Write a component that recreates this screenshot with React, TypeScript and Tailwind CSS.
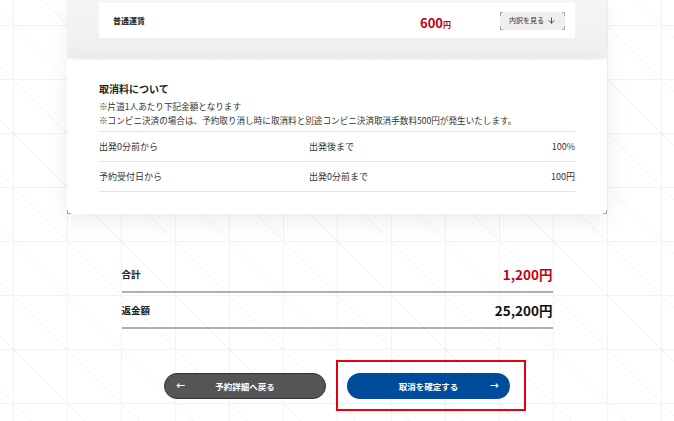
import { ArrowDown } from "lucide-react";

function Corners({ color = "border-[#9a9a9a]", size = "w-[5px] h-[5px]", top = true }: { color?: string; size?: string; top?: boolean }) {
  return (
    <>
      {top && <span className={`absolute left-0 top-0 border-l border-t ${color} ${size}`} />}
      {top && <span className={`absolute right-0 top-0 border-r border-t ${color} ${size}`} />}
      <span className={`absolute left-0 bottom-0 border-l border-b ${color} ${size}`} />
      <span className={`absolute right-0 bottom-0 border-r border-b ${color} ${size}`} />
    </>
  );
}

const rows = [
  { from: "出発0分前から", to: "出発後まで", fee: "100%" },
  { from: "予約受付日から", to: "出発0分前まで", fee: "100円" },
];

export default function App() {
  return (
    <div
      className="min-h-[421px] w-full overflow-hidden bg-white font-['Noto_Sans_CJK_JP','Noto_Sans',sans-serif] text-[#222] bg-[linear-gradient(to_right,#f2f2f2_1px,transparent_1px),linear-gradient(to_bottom,#f2f2f2_1px,transparent_1px),linear-gradient(to_top_right,transparent_calc(50%-0.6px),#f1f1f1_50%,transparent_calc(50%+0.6px))] bg-[size:54px_54px] bg-[position:13px_25px]"
    >
      <div className="mx-auto w-[540px]">
        {/* fare panel */}
        <div className="h-[58px] bg-[linear-gradient(to_bottom,#f5f5f5,#efefef)] px-8 pt-[3px] shadow-[0_4px_18px_rgba(0,0,0,0.06)]">
          <div className="flex h-[35px] items-center bg-white pl-[14px] pr-[10px]">
            <span className="text-[8px] font-bold">普通運賃</span>
            <span className="ml-auto mr-[49px] font-bold text-[#c4000f]">
              <span className="text-[13px]">600</span>
              <span className="text-[8px]">円</span>
            </span>
            <button className="relative flex h-[18px] w-[65px] items-center justify-center gap-[3px] bg-[#efefef] text-[7px] text-[#333]">
              <Corners color="border-[#aaa]" size="w-[3px] h-[4px]" />
              内訳を見る
              <ArrowDown className="h-[9px] w-[9px]" strokeWidth={2.2} />
            </button>
          </div>
        </div>

        {/* cancellation fee card */}
        <div className="relative mt-[2px] bg-white px-8 pb-[22px] pt-[21px] shadow-[0_6px_22px_rgba(0,0,0,0.08)]">
          <Corners color="border-[#a8a8a8]" size="w-[4px] h-[4px]" top={false} />
          <h3 className="text-[10px] font-bold leading-[15px]">取消料について</h3>
          <p className="mt-[3px] text-[8.6px] leading-[14px] text-[#333]">※片道1人あたり下記金額となります</p>
          <p className="text-[8.6px] leading-[14px] text-[#333]">
            ※コンビニ決済の場合は、予約取り消し時に取消料と別途コンビニ決済取消手数料500円が発生いたします。
          </p>
          <div className="mt-[4px] border-t border-[#e2e2e2]">
            {rows.map((r) => (
              <div key={r.from} className="flex h-[30px] items-center border-b border-[#e2e2e2] text-[9px] text-[#333]">
                <span className="w-[210px]">{r.from}</span>
                <span>{r.to}</span>
                <span className="ml-auto">{r.fee}</span>
              </div>
            ))}
          </div>
        </div>
      </div>

      {/* totals */}
      <div className="mx-auto mt-[43px] w-[431px]">
        <div className="flex h-[36px] items-center border-b-2 border-[#b0b0b0]">
          <span className="text-[9.5px] font-bold">合計</span>
          <span className="ml-auto text-[13.5px] font-bold text-[#c4000f]">1,200円</span>
        </div>
        <div className="flex h-[36px] items-center border-b-2 border-[#b0b0b0]">
          <span className="text-[9.5px] font-bold">返金額</span>
          <span className="ml-auto text-[13.5px] font-bold text-[#111]">25,200円</span>
        </div>
      </div>

      {/* buttons */}
      <div className="mt-[44px] flex justify-center gap-[21px] pb-[22px]">
        <button className="relative flex h-[26px] w-[162px] items-center justify-center rounded-full border border-[#333] bg-[#555] text-[8.5px] font-bold text-white">
          <span className="absolute left-[11px] text-[9px] font-bold">←</span>
          予約詳細へ戻る
        </button>
        <div className="relative">
          <span className="absolute -bottom-[12px] -left-[11px] -right-[16px] -top-[13px] border-2 border-[#e60012]" />
          <button className="relative flex h-[26px] w-[163px] items-center justify-center rounded-full bg-[#004b9c] text-[8.5px] font-bold text-white">
            取消を確定する
            <span className="absolute right-[11px] text-[9px] font-bold">→</span>
          </button>
        </div>
      </div>
    </div>
  );
}
